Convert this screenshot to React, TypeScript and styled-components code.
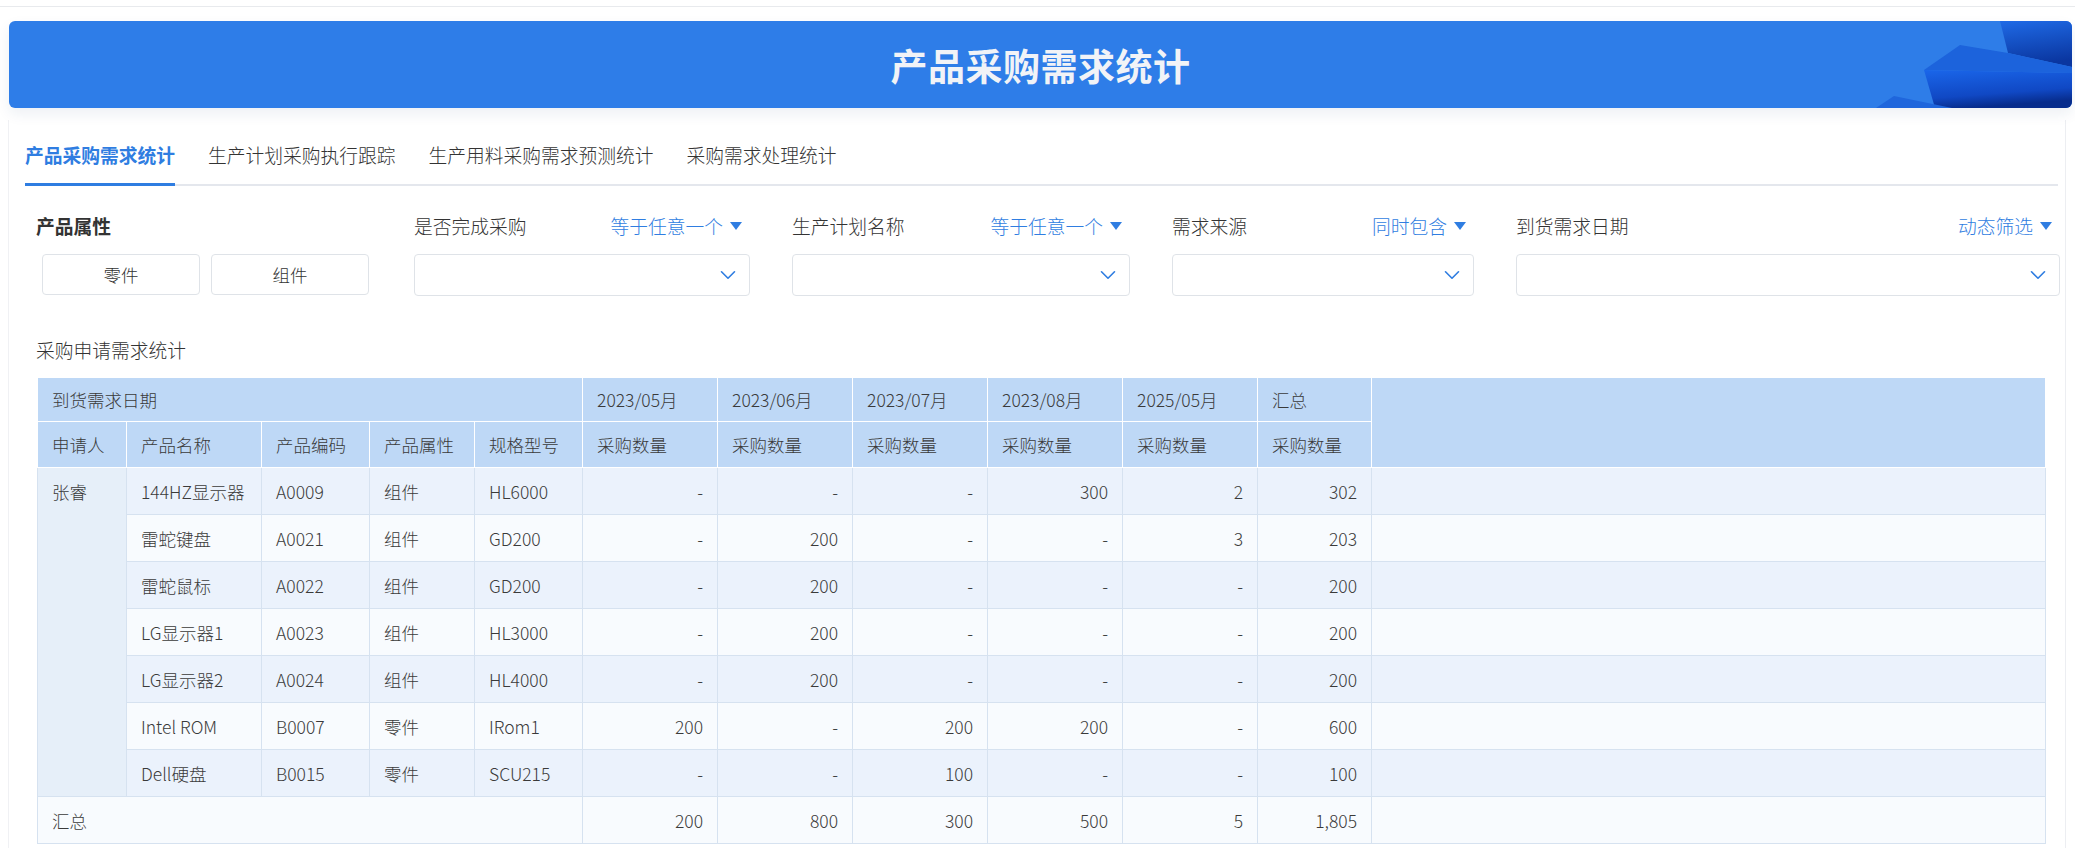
import styled, { createGlobalStyle } from "styled-components";
import { ChevronDown } from "lucide-react";

const tabs = ["产品采购需求统计", "生产计划采购执行跟踪", "生产用料采购需求预测统计", "采购需求处理统计"];

const selects = [
  { label: "是否完成采购", op: "等于任意一个" },
  { label: "生产计划名称", op: "等于任意一个" },
  { label: "需求来源", op: "同时包含" },
  { label: "到货需求日期", op: "动态筛选" },
];

const months = ["2023/05月", "2023/06月", "2023/07月", "2023/08月", "2025/05月"];

const rows = [
  { name: "144HZ显示器", code: "A0009", kind: "组件", spec: "HL6000", values: ["-", "-", "-", "300", "2", "302"] },
  { name: "雷蛇键盘", code: "A0021", kind: "组件", spec: "GD200", values: ["-", "200", "-", "-", "3", "203"] },
  { name: "雷蛇鼠标", code: "A0022", kind: "组件", spec: "GD200", values: ["-", "200", "-", "-", "-", "200"] },
  { name: "LG显示器1", code: "A0023", kind: "组件", spec: "HL3000", values: ["-", "200", "-", "-", "-", "200"] },
  { name: "LG显示器2", code: "A0024", kind: "组件", spec: "HL4000", values: ["-", "200", "-", "-", "-", "200"] },
  { name: "Intel ROM", code: "B0007", kind: "零件", spec: "IRom1", values: ["200", "-", "200", "200", "-", "600"] },
  { name: "Dell硬盘", code: "B0015", kind: "零件", spec: "SCU215", values: ["-", "-", "100", "-", "-", "100"] },
];

const totals = ["200", "800", "300", "500", "5", "1,805"];

const colWidths = [89, 135, 108, 105, 108, 135, 135, 135, 135, 135, 114, 674];

function App() {
  return (
    <Page>
      <GlobalStyle />
      <TopLine />
      <Banner>
        <BannerTitle>产品采购需求统计</BannerTitle>
        <BannerDeco viewBox="0 0 200 87" preserveAspectRatio="none">
          <defs>
            <linearGradient id="faceA" x1="0" y1="0" x2="0.2" y2="1">
              <stop offset="0" stopColor="#1f6ae6" />
              <stop offset="1" stopColor="#0a36a0" />
            </linearGradient>
            <linearGradient id="faceB" x1="0" y1="0" x2="0.3" y2="1">
              <stop offset="0" stopColor="#1a66ea" />
              <stop offset="0.7" stopColor="#1048c4" />
              <stop offset="1" stopColor="#072c8c" />
            </linearGradient>
          </defs>
          <polygon points="128,0 200,0 200,46 136,32" fill="url(#faceA)" />
          <polygon points="88,24 136,32 200,46 200,52 52,49" fill="#1c63dc" />
          <polygon points="52,49 200,52 200,87 63,87" fill="url(#faceB)" />
          <polygon points="22,75 80,87 4,87" fill="#1f66dc" />
        </BannerDeco>
      </Banner>
      <Card>
        <TabBar>
          {tabs.map((t, i) => (
            <Tab key={t} $active={i === 0}>
              {t}
            </Tab>
          ))}
        </TabBar>
        <Filters>
          <FilterCol>
            <FilterHead>
              <FilterLabel $bold>产品属性</FilterLabel>
            </FilterHead>
            <ToggleRow>
              <ToggleButton>零件</ToggleButton>
              <ToggleButton>组件</ToggleButton>
            </ToggleRow>
          </FilterCol>
          {selects.map((s) => (
            <FilterCol key={s.label}>
              <FilterHead>
                <FilterLabel>{s.label}</FilterLabel>
                <FilterOp>
                  {s.op}
                  <svg width="12" height="9" viewBox="0 0 12 9">
                    <polygon points="0,0 12,0 6,8" fill="#2f7de1" />
                  </svg>
                </FilterOp>
              </FilterHead>
              <SelectBox>
                <ChevronDown size={26} strokeWidth={1.5} color="#2f7de1" />
              </SelectBox>
            </FilterCol>
          ))}
        </Filters>
        <SectionTitle>采购申请需求统计</SectionTitle>
        <Table>
          <colgroup>
            {colWidths.map((w, i) => (
              <col key={i} style={{ width: w }} />
            ))}
          </colgroup>
          <thead>
            <HeadRow $h={44}>
              <Th colSpan={5}>到货需求日期</Th>
              {months.map((m) => (
                <Th key={m}>{m}</Th>
              ))}
              <Th>汇总</Th>
              <Th rowSpan={2} />
            </HeadRow>
            <HeadRow $h={46}>
              <Th>申请人</Th>
              <Th>产品名称</Th>
              <Th>产品编码</Th>
              <Th>产品属性</Th>
              <Th>规格型号</Th>
              {[...months, "汇总"].map((m) => (
                <Th key={m}>采购数量</Th>
              ))}
            </HeadRow>
          </thead>
          <tbody>
            {rows.map((r, i) => (
              <BodyRow key={r.code} $odd={i % 2 === 0}>
                {i === 0 && <NameCell rowSpan={rows.length}>张睿</NameCell>}
                <Td>{r.name}</Td>
                <Td>{r.code}</Td>
                <Td>{r.kind}</Td>
                <Td>{r.spec}</Td>
                {r.values.map((v, j) => (
                  <Td key={j} $num>
                    {v}
                  </Td>
                ))}
                <Td />
              </BodyRow>
            ))}
            <BodyRow $odd={false}>
              <Td colSpan={5}>汇总</Td>
              {totals.map((v, j) => (
                <Td key={j} $num>
                  {v}
                </Td>
              ))}
              <Td />
            </BodyRow>
          </tbody>
        </Table>
      </Card>
    </Page>
  );
}

export default App;

const GlobalStyle = createGlobalStyle`
  * {
    margin: 0;
    padding: 0;
    box-sizing: border-box;
  }

  body {
    background: #ffffff;
    font-family: "Noto Sans CJK SC", "Noto Sans", sans-serif;
    font-weight: 300;
    color: #333333;
    overflow: hidden;
  }
`;

const Page = styled.div`
  width: 2075px;
  height: 848px;
  overflow: hidden;
  background: #ffffff;
`;

const TopLine = styled.div`
  height: 7px;
  border-bottom: 1px solid #e8eaed;
  margin-bottom: 14px;
`;

const Banner = styled.div`
  position: relative;
  height: 87px;
  margin: 0 3px 0 9px;
  border-radius: 6px;
  background: #2e7de8;
  box-shadow: 0 6px 14px rgba(30, 60, 110, 0.08);
  overflow: hidden;
  display: flex;
  align-items: center;
  justify-content: center;
`;

const BannerTitle = styled.h1`
  font-size: 37px;
  font-weight: 700;
  color: #f1f3f7;
  letter-spacing: 0.5px;
`;

const BannerDeco = styled.svg`
  position: absolute;
  top: 0;
  right: 0;
  width: 200px;
  height: 87px;
`;

const Card = styled.div`
  margin: 12px 9px 0 8px;
  border-left: 1px solid #f0f1f4;
  border-right: 1px solid #eceef2;
  padding: 22px 7px 0 0;
  height: 740px;
`;

const TabBar = styled.div`
  display: flex;
  margin-left: 16px;
  border-bottom: 2px solid #e4e7ed;
`;

const Tab = styled.div<{ $active?: boolean }>`
  font-size: 18.75px;
  line-height: 26px;
  padding-bottom: 15px;
  margin-right: 33px;
  margin-bottom: -2px;
  border-bottom: 3px solid ${(p) => (p.$active ? "#2f7de1" : "transparent")};
  color: ${(p) => (p.$active ? "#2f7de1" : "#333333")};
  font-weight: ${(p) => (p.$active ? 700 : 300)};
`;

const Filters = styled.div`
  display: grid;
  grid-template-columns: 336px 336px 338px 302px 544px;
  column-gap: 42px;
  margin-top: 28px;
  padding-left: 27px;
`;

const FilterCol = styled.div`
  display: flex;
  flex-direction: column;
`;

const FilterHead = styled.div`
  display: flex;
  align-items: center;
  justify-content: space-between;
  height: 24px;
  padding-right: 8px;
  margin-bottom: 16px;
`;

const FilterLabel = styled.span<{ $bold?: boolean }>`
  font-size: 18.75px;
  line-height: 24px;
  color: #333333;
  font-weight: ${(p) => (p.$bold ? 700 : 300)};
`;

const FilterOp = styled.span`
  display: flex;
  align-items: center;
  gap: 7px;
  font-size: 18.75px;
  line-height: 24px;
  color: #2f7de1;
`;

const ToggleRow = styled.div`
  display: flex;
  gap: 11px;
  padding-left: 6px;
`;

const ToggleButton = styled.div`
  width: 158px;
  height: 41px;
  border: 1px solid #dfe3e8;
  border-radius: 4px;
  display: flex;
  align-items: center;
  justify-content: center;
  font-size: 17.5px;
  color: #333333;
  background: #ffffff;
`;

const SelectBox = styled.div`
  height: 42px;
  border: 1px solid #dfe3e8;
  border-radius: 4px;
  display: flex;
  align-items: center;
  justify-content: flex-end;
  padding-right: 8px;
  background: #ffffff;
`;

const SectionTitle = styled.div`
  font-size: 18.75px;
  line-height: 24px;
  color: #333333;
  margin: 42px 0 15px 27px;
`;

const Table = styled.table`
  margin-left: 28px;
  width: 2008px;
  table-layout: fixed;
  border-collapse: collapse;
  font-size: 17.5px;
  color: #3a3a3a;
`;

const HeadRow = styled.tr<{ $h: number }>`
  height: ${(p) => p.$h}px;
  background: #bed8f6;
`;

const Th = styled.th`
  text-align: left;
  font-weight: 300;
  padding: 0 14px;
  border: 1px solid #ffffff;
  white-space: nowrap;
`;

const BodyRow = styled.tr<{ $odd: boolean }>`
  height: 47px;
  background: ${(p) => (p.$odd ? "#ebf2fc" : "#f8fbfe")};
`;

const Td = styled.td<{ $num?: boolean }>`
  padding: 0 14px;
  border: 1px solid #d6e2f0;
  text-align: ${(p) => (p.$num ? "right" : "left")};
  white-space: nowrap;
`;

const NameCell = styled.td`
  vertical-align: top;
  padding: 12px 14px 0;
  line-height: 24px;
  background: #e6eff9;
  border: 1px solid #d6e2f0;
`;
